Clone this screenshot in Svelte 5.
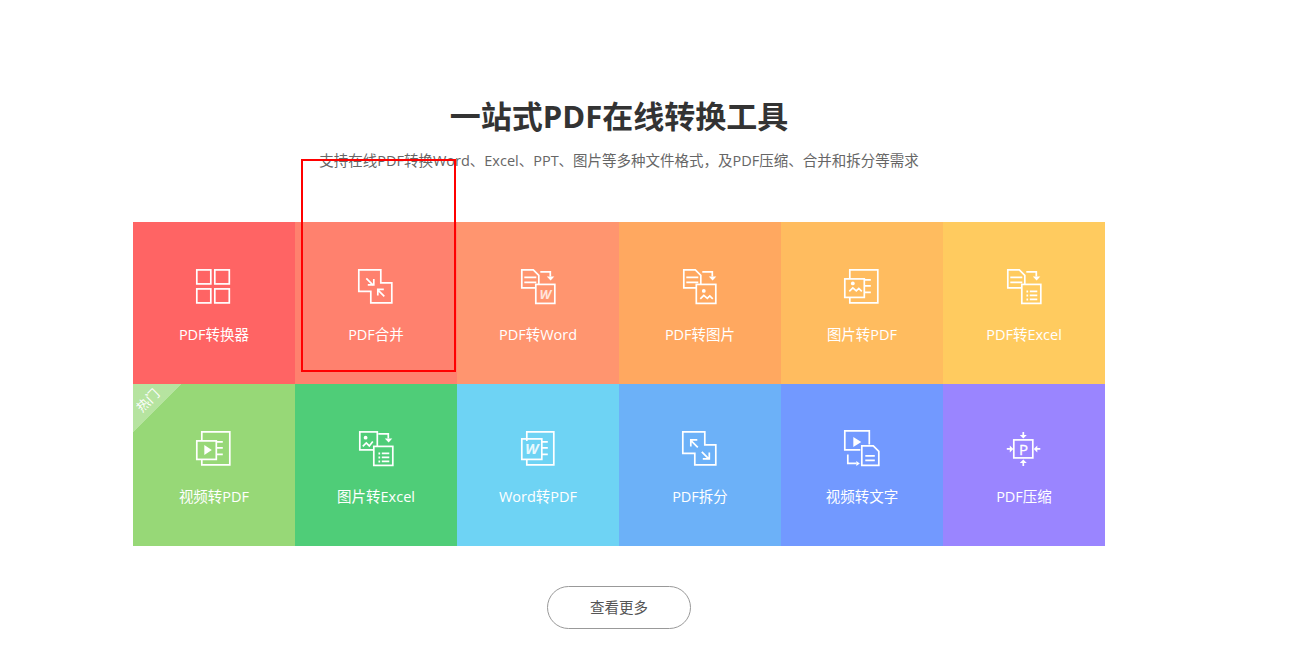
<script>
  const tools = [
    { name: 'PDF转换器', color: '#ff6464', icon: gridIcon },
    { name: 'PDF合并', color: '#ff816e', icon: mergeIcon },
    { name: 'PDF转Word', color: '#ff956f', icon: pdfWordIcon },
    { name: 'PDF转图片', color: '#ffa860', icon: pdfImageIcon },
    { name: '图片转PDF', color: '#ffbc5f', icon: imagePdfIcon },
    { name: 'PDF转Excel', color: '#ffcb5f', icon: pdfExcelIcon },
    { name: '视频转PDF', color: '#97d877', icon: videoPdfIcon, hot: true },
    { name: '图片转Excel', color: '#4fcd78', icon: imageExcelIcon },
    { name: 'Word转PDF', color: '#6ed3f4', icon: wordPdfIcon },
    { name: 'PDF拆分', color: '#6cb1f8', icon: splitIcon },
    { name: '视频转文字', color: '#7299ff', icon: videoTextIcon },
    { name: 'PDF压缩', color: '#9a85ff', icon: compressIcon }
  ];
</script>

{#snippet docPage()}
  <path d="M3.5 3.5H15L20.5 9V21.5H3.5Z" />
  <path d="M6 11H18M6 16H18" />
{/snippet}

{#snippet turnArrow()}
  <path d="M22 5.5H32V10" />
  <path d="M28.5 10H36L32.3 14Z" class="solid" />
{/snippet}

{#snippet sheetLines()}
  <path d="M23 24V26M23 28V30M23 32V34M25.5 25H33M25.5 29H33M25.5 33H33" />
{/snippet}

{#snippet landscape(x, y)}
  <circle cx={x + 3.5} cy={y} r="1.9" class="solid" />
  <path d="M{x} {y + 8}L{x + 3.5} {y + 4.5}L{x + 7} {y + 7.5}L{x + 9.5} {y + 5}L{x + 12.5} {y + 8}" />
{/snippet}

{#snippet stackedPage(left)}
  <path d="M{left} 12.5V3.5H35.5V36.5H{left}V31" />
  <path d="M{left + 15} 13.5H{left + 21}M{left + 15} 19.5H{left + 21}M{left + 15} 26H{left + 21}" />
{/snippet}

{#snippet gridIcon()}
  <rect x="2.5" y="3.5" width="14" height="14" />
  <rect x="20.5" y="3.5" width="14.5" height="14" />
  <rect x="2.5" y="22.5" width="14" height="14" />
  <rect x="20.5" y="22.5" width="14.5" height="14" />
{/snippet}

{#snippet mergeIcon()}
  <path d="M2.5 3.5H24.5V16.5H35.5V36.5H14.5V25H2.5Z" />
  <path d="M10 12L17 19M11.5 18.5H17.5V12.5" />
  <path d="M28 30L21.5 23.5M21.5 29V23H27.5" />
{/snippet}

{#snippet splitIcon()}
  <path d="M2.5 3.5H24.5V16.5H35.5V36.5H14.5V25H2.5Z" />
  <path d="M17.5 19L10.5 12M10.5 18V11.5H17" />
  <path d="M21.5 23.5L28.5 30.5M22.5 30.5H29V24" />
{/snippet}

{#snippet pdfWordIcon()}
  {@render docPage()}
  {@render turnArrow()}
  <rect x="17.5" y="18" width="19" height="19" class="fill-cell" />
  <text x="27" y="32.5" class="letter">W</text>
{/snippet}

{#snippet pdfImageIcon()}
  {@render docPage()}
  {@render turnArrow()}
  <rect x="16" y="18" width="19.5" height="19" class="fill-cell" />
  {@render landscape(20, 24.5)}
{/snippet}

{#snippet imagePdfIcon()}
  {@render stackedPage(7.5)}
  <rect x="2.5" y="12.5" width="19.5" height="18.5" />
  {@render landscape(7, 17)}
{/snippet}

{#snippet pdfExcelIcon()}
  {@render docPage()}
  {@render turnArrow()}
  <rect x="17.5" y="18" width="19" height="19" class="fill-cell" />
  {@render sheetLines()}
{/snippet}

{#snippet videoPdfIcon()}
  {@render stackedPage(7.5)}
  <rect x="2.5" y="12.5" width="19.5" height="18.5" />
  <path d="M10 16.5L17.5 21.5L10 26.5Z" class="solid" />
{/snippet}

{#snippet imageExcelIcon()}
  <rect x="3.5" y="3.5" width="17.5" height="18" />
  <circle cx="9.3" cy="9.3" r="1.9" class="solid" />
  <path d="M6.5 18L10 14.5L13 17.5L16.5 13" />
  {@render turnArrow()}
  <rect x="17.5" y="18" width="19" height="19" class="fill-cell" />
  {@render sheetLines()}
{/snippet}

{#snippet wordPdfIcon()}
  {@render stackedPage(8.5)}
  <rect x="3.5" y="10.5" width="20" height="20.5" />
  <text x="13.5" y="26" class="letter big">W</text>
{/snippet}

{#snippet videoTextIcon()}
  <path d="M18 21.5H2.5V2.5H27V16" />
  <path d="M11 8.5L19 13.5L11 18.5Z" class="solid" />
  <path d="M5.5 26V35H14" />
  <path d="M14 32.5V37.5L17.5 35Z" class="solid" />
  <path d="M19.5 17.5H31L36.5 23V37H19.5Z" />
  <path d="M23 27.5H32.5M23 32H32.5" />
{/snippet}

{#snippet compressIcon()}
  <rect x="9.5" y="11.5" width="19" height="18" />
  <text x="19.2" y="26.2" class="plain-letter">P</text>
  <path d="M19 3.5V7M19 33.5V37.5M2.5 20.5H6M31.5 20.5H36" />
  <path d="M15.5 6.5H22.5L19 10ZM15.5 34.5L19 31L22.5 34.5ZM5.5 17V24L9 20.5ZM33 17V24L29.5 20.5Z" class="solid" />
{/snippet}

<div class="frame" aria-hidden="true"></div>

<main class="tools">
  <h1>一站式PDF在线转换工具</h1>
  <p class="intro">支持在线PDF转换Word、Excel、PPT、图片等多种文件格式，及PDF压缩、合并和拆分等需求</p>

  <div class="grid">
    {#each tools as tool}
      <a class="cell" href="#top" style="--cell: {tool.color}">
        {#if tool.hot}
          <span class="hot"><span>热门</span></span>
        {/if}
        <svg viewBox="-0.3 -0.4 40 40" width="40" height="40" class="icon">
          {@render tool.icon()}
        </svg>
        <span class="label">{tool.name}</span>
      </a>
    {/each}
  </div>

  <button class="more">查看更多</button>
</main>

<style>
  :global(body) {
    background: #fff;
  }

  .tools {
    width: 972px;
    margin-left: 133px;
    padding-top: 93px;
    font-family: "Open Sans", "Noto Sans CJK SC", sans-serif;
    text-align: center;
  }

  h1 {
    margin: 0;
    font-size: 31px;
    line-height: 46px;
    font-weight: 700;
    color: #333;
  }

  .intro {
    margin: 11px 0 51px;
    font-size: 14.5px;
    line-height: 21px;
    color: #666;
  }

  .grid {
    display: grid;
    grid-template-columns: repeat(6, 162px);
    grid-auto-rows: 162px;
  }

  .cell {
    position: relative;
    display: flex;
    flex-direction: column;
    align-items: center;
    padding-top: 44px;
    box-sizing: border-box;
    overflow: hidden;
    background: var(--cell);
    color: #fff;
    text-decoration: none;
  }

  .icon {
    display: block;
    fill: none;
    stroke: #fff;
    stroke-width: 1.7;
  }

  .icon :global(.solid) {
    fill: #fff;
    stroke: none;
  }

  .icon :global(.fill-cell) {
    fill: var(--cell);
  }

  .icon :global(.letter) {
    fill: #fff;
    fill-opacity: 0.75;
    stroke: none;
    font-size: 13px;
    font-weight: 700;
    font-style: italic;
    text-anchor: middle;
  }

  .icon :global(.letter.big) {
    fill-opacity: 0.85;
    font-size: 15px;
  }

  .icon :global(.plain-letter) {
    fill: #fff;
    stroke: #fff;
    stroke-width: 0.3;
    font-size: 15px;
    text-anchor: middle;
  }

  .label {
    margin-top: 19px;
    font-size: 14.5px;
    line-height: 20px;
  }

  .hot {
    position: absolute;
    left: 0;
    top: 0;
    width: 49px;
    height: 49px;
    background: linear-gradient(135deg, rgba(255, 255, 255, 0.3) 50%, transparent 50%);
  }

  .hot span {
    position: absolute;
    left: 2px;
    top: 8px;
    font-size: 13px;
    line-height: 17px;
    transform: rotate(-45deg);
  }

  .more {
    display: block;
    width: 144px;
    height: 43px;
    margin: 40px auto 0;
    padding: 0 0 2px;
    border: 1px solid #999;
    border-radius: 22px;
    background: #fff;
    font: inherit;
    font-size: 14.5px;
    color: #555;
  }

  .frame {
    position: absolute;
    left: 301px;
    top: 159px;
    width: 151px;
    height: 209px;
    border: 2px solid #f00;
    z-index: 2;
  }
</style>
